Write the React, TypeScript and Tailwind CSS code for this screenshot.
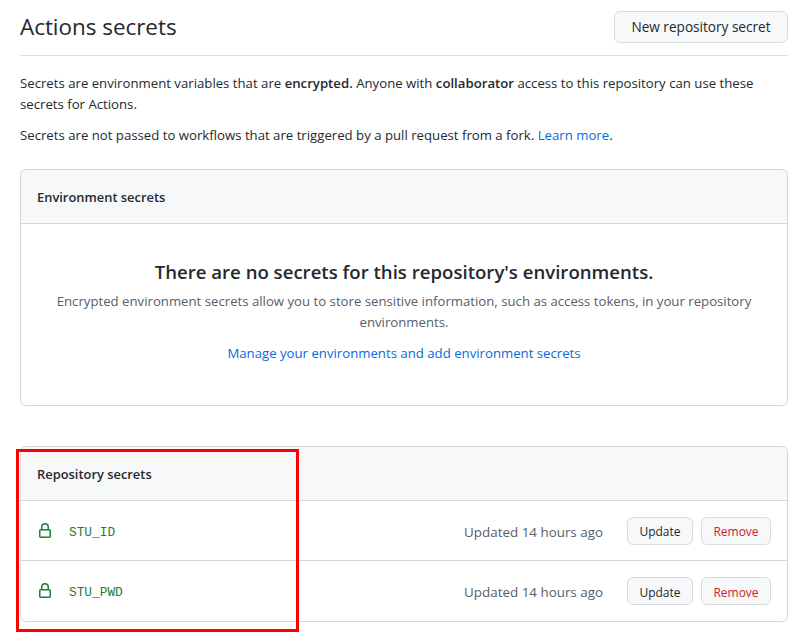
const uiFont = "font-['Open_Sans','Noto_Sans',sans-serif]"

function LockIcon() {
  return (
    <svg width="16" height="16" viewBox="0 0 16 16" fill="currentColor" className="text-[#1a7f37] shrink-0">
      <path d="M4 4a4 4 0 0 1 8 0v2h.25c.966 0 1.75.784 1.75 1.75v5.5A1.75 1.75 0 0 1 12.25 15h-8.5A1.75 1.75 0 0 1 2 13.25v-5.5C2 6.784 2.784 6 3.75 6H4Zm8.25 3.5h-8.5a.25.25 0 0 0-.25.25v5.5c0 .138.112.25.25.25h8.5a.25.25 0 0 0 .25-.25v-5.5a.25.25 0 0 0-.25-.25ZM10.5 6V4a2.5 2.5 0 1 0-5 0v2Z" />
    </svg>
  )
}

function SecretRow({ name, last }: { name: string; last?: boolean }) {
  return (
    <div className={`flex items-center h-[60px] pl-4 pr-4 ${last ? '' : 'border-b border-[#d0d7de]'}`}>
      <LockIcon />
      <code className="ml-4 mt-[3px] font-['Liberation_Mono',monospace] text-[12.8px] text-[#1a7f37]">{name}</code>
      <span className="ml-auto mt-[3px] text-[13.4px] text-[#57606a]">Updated 14 hours ago</span>
      <button className="ml-6 h-[28px] w-[66px] pt-[2px] rounded-md border border-[#d8dce0] bg-[#f6f8fa] text-[12px] font-medium text-[#24292f]">
        Update
      </button>
      <button className="ml-2 h-[28px] w-[70px] pt-[2px] rounded-md border border-[#d8dce0] bg-[#f6f8fa] text-[12px] font-medium text-[#cf222e]">
        Remove
      </button>
    </div>
  )
}

export default function App() {
  return (
    <div className={`relative h-[638px] w-[808px] overflow-hidden bg-white pl-5 pr-5 text-[13.2px] leading-[21px] text-[#24292f] ${uiFont}`}>
      {/* Page header */}
      <div className="flex items-start justify-between h-[56px] pt-[11px] border-b border-[#d8dee4]">
        <h2 className="text-[22.4px] leading-[32px] font-normal">Actions secrets</h2>
        <button className="h-[32px] w-[174px] pb-[2px] rounded-md border border-[#d8dce0] bg-[#f6f8fa] text-[13.6px] font-medium">
          New repository secret
        </button>
      </div>

      <p className="mt-[17px]">
        Secrets are environment variables that are <strong className="font-semibold">encrypted.</strong> Anyone with{' '}
        <strong className="font-semibold">collaborator</strong> access to this repository can use these secrets for Actions.
      </p>
      <p className="mt-2.5">
        Secrets are not passed to workflows that are triggered by a pull request from a fork.{' '}
        <a className="text-[#0969da]">Learn more</a>.
      </p>

      {/* Environment secrets */}
      <div className="mt-[23px] h-[237px] rounded-md border border-[#d0d7de]">
        <div className="flex items-center h-[54px] px-4 pt-[2px] rounded-t-md bg-[#f6f8fa] border-b border-[#d0d7de] text-[12.9px] font-semibold">
          Environment secrets
        </div>
        <div className="px-8 pt-[35px] text-center">
          <h3 className="text-[18.6px] leading-[26px] font-semibold">There are no secrets for this repository's environments.</h3>
          <p className="mt-[6px] text-[#57606a]">
            Encrypted environment secrets allow you to store sensitive information, such as access tokens, in your repository environments.
          </p>
          <a className="block mt-[10px] text-[#0969da]">Manage your environments and add environment secrets</a>
        </div>
      </div>

      {/* Repository secrets */}
      <div className="mt-10 rounded-md border border-[#d0d7de]">
        <div className="flex items-center h-[54px] px-4 pt-[2px] rounded-t-md bg-[#f6f8fa] border-b border-[#d0d7de] text-[12.9px] font-semibold">
          Repository secrets
        </div>
        <SecretRow name="STU_ID" />
        <SecretRow name="STU_PWD" last />
      </div>

      {/* Red annotation box */}
      <div className="absolute left-[16px] top-[449px] h-[183px] w-[283px] border-[3px] border-[#ff0000]" />
    </div>
  )
}
